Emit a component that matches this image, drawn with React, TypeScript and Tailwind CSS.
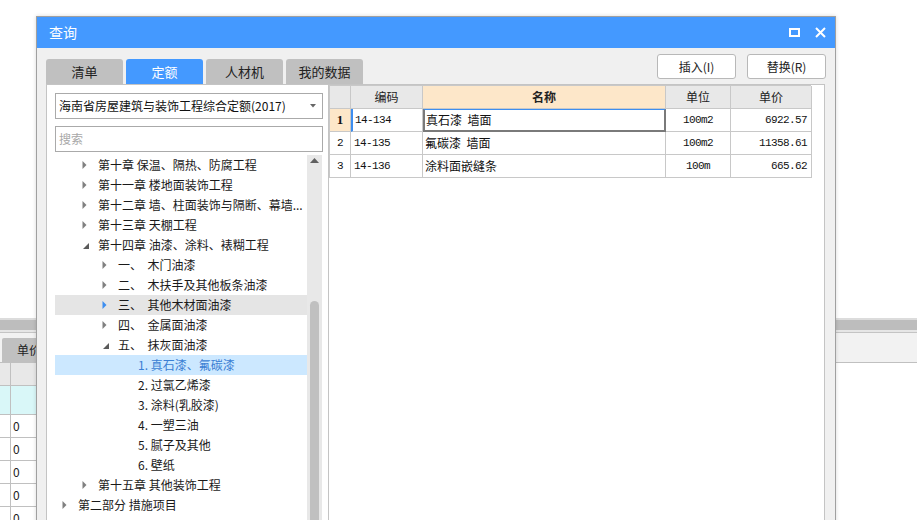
import React from "react";

type Node = {
  level: 1 | 2 | 3 | 4;
  text: string;
  state: "collapsed" | "expanded" | "leaf";
  hover?: boolean;
  selected?: boolean;
};

const tree: Node[] = [
  { level: 2, text: "第十章 保温、隔热、防腐工程", state: "collapsed" },
  { level: 2, text: "第十一章 楼地面装饰工程", state: "collapsed" },
  { level: 2, text: "第十二章 墙、柱面装饰与隔断、幕墙...", state: "collapsed" },
  { level: 2, text: "第十三章 天棚工程", state: "collapsed" },
  { level: 2, text: "第十四章 油漆、涂料、裱糊工程", state: "expanded" },
  { level: 3, text: "一、  木门油漆", state: "collapsed" },
  { level: 3, text: "二、  木扶手及其他板条油漆", state: "collapsed" },
  { level: 3, text: "三、  其他木材面油漆", state: "collapsed", hover: true },
  { level: 3, text: "四、  金属面油漆", state: "collapsed" },
  { level: 3, text: "五、  抹灰面油漆", state: "expanded" },
  { level: 4, text: "1. 真石漆、氟碳漆", state: "leaf", selected: true },
  { level: 4, text: "2. 过氯乙烯漆", state: "leaf" },
  { level: 4, text: "3. 涂料(乳胶漆)", state: "leaf" },
  { level: 4, text: "4. 一塑三油", state: "leaf" },
  { level: 4, text: "5. 腻子及其他", state: "leaf" },
  { level: 4, text: "6. 壁纸", state: "leaf" },
  { level: 2, text: "第十五章 其他装饰工程", state: "collapsed" },
  { level: 1, text: "第二部分 措施项目", state: "collapsed" },
];

const indent = {
  1: "pl-[7px]",
  2: "pl-[27px]",
  3: "pl-[47px]",
  4: "pl-[67px]",
};

const rows = [
  { no: "1", code: "14-134", name: "真石漆  墙面", unit: "100m2", price: "6922.57" },
  { no: "2", code: "14-135", name: "氟碳漆  墙面", unit: "100m2", price: "11358.61" },
  { no: "3", code: "14-136", name: "涂料面嵌缝条", unit: "100m", price: "665.62" },
];

const ui = "font-['Noto_Sans_CJK_SC','Microsoft_YaHei',sans-serif]";
const mono = "font-['Liberation_Mono','Noto_Sans_CJK_SC',monospace] text-[11px] tracking-[-0.6px]";

function Arrow({ node }: { node: Node }) {
  if (node.state === "leaf") return <span className="w-[16px] shrink-0" />;
  if (node.state === "expanded")
    return (
      <span className="w-[16px] shrink-0 flex items-center">
        <svg width="7" height="7" viewBox="0 0 7 7" className="ml-[1px] mt-[3px]">
          <polygon points="6,0 6,6 0,6" fill="#5a5a5a" />
        </svg>
      </span>
    );
  return (
    <span className="w-[16px] shrink-0 flex items-center">
      <svg width="5" height="8" viewBox="0 0 5 8">
        <polygon points="0.5,0 4.5,4 0.5,8" fill={node.hover ? "#3d8ef0" : "#808080"} />
      </svg>
    </span>
  );
}

function TreeRow({ node }: { node: Node }) {
  const bg = node.selected ? "bg-[#cce8ff]" : node.hover ? "bg-[#e5e5e5]" : "";
  const color = node.selected ? "text-[#3b7fd4]" : "text-[#1a1a1a]";
  return (
    <div className={`h-[20px] flex items-center whitespace-pre overflow-hidden ${indent[node.level]} ${bg}`}>
      <Arrow node={node} />
      <span className={`text-[12px] leading-[20px] ${color}`}>{node.text}</span>
    </div>
  );
}

function Background() {
  return (
    <div className="flex flex-col w-full">
      <div className="h-[318px] bg-white" />
      <div className="h-[2px] bg-[#dcdcdc]" />
      <div className="h-[10px] bg-[#bdbdbd]" />
      <div className="h-[2px] bg-[#e6e6e6]" />
      <div className="h-[1px] bg-[#c4c4c4]" />
      <div className="h-[30px] bg-[#f2f2f2] flex items-end pl-[2px] border-b border-[#c0c0c0]">
        <div className="h-[24px] w-[60px] bg-[#c0c0c0] rounded-t-[2px] flex items-center pl-[15px] text-[12px] text-[#222]">
          单价
        </div>
      </div>
      <div className="w-[200px]">
        <div className="flex h-[23px] bg-[#e8e8e8] border-b border-[#c0c0c0]">
          <div className="w-[11px] border-r border-[#c0c0c0]" />
        </div>
        <div className="flex h-[29px] bg-[#d9f7f8] border-b border-[#c0c0c0]">
          <div className="w-[11px] border-r border-[#c0c0c0]" />
          <div className="w-[30px] border-r border-[#c0c0c0]" />
        </div>
        {[0, 1, 2, 3, 4].map((i) => (
          <div key={i} className="flex h-[23px] bg-white border-b border-[#c0c0c0]">
            <div className="w-[11px] border-r border-[#c0c0c0]" />
            <div className="w-[30px] border-r border-[#c0c0c0] pl-[2px] flex items-center text-[12px] text-[#222]">0</div>
          </div>
        ))}
      </div>
    </div>
  );
}

function Table() {
  const cols = "grid grid-cols-[21px_72px_243px_65px_81px]";
  const cell = "border-r border-b border-[#c8c8c8] h-[23px] flex items-center";
  return (
    <div className="w-[482px] border-l border-t border-[#c8c8c8]">
      <div className={`${cols} text-[12px] text-[#222]`}>
        <div className={`${cell} bg-[#e8e8e8]`} />
        <div className={`${cell} bg-[#e8e8e8] justify-center`}>编码</div>
        <div className={`${cell} bg-[#fde7c9] justify-center font-bold`}>名称</div>
        <div className={`${cell} bg-[#e8e8e8] justify-center`}>单位</div>
        <div className={`${cell} bg-[#e8e8e8] justify-center`}>单价</div>
      </div>
      {rows.map((r, i) => {
        const cur = i === 0;
        return (
          <div key={r.no} className={`${cols} text-[#111]`}>
            <div
              className={`${cell} justify-center ${
                cur
                  ? "bg-[#fde7c9] font-bold font-['Liberation_Serif',serif] text-[13px]"
                  : `bg-white ${mono}`
              }`}
            >
              {r.no}
            </div>
            <div className={`${cell} bg-white pl-[2px] ${mono} ${cur ? "border-l-2 border-l-[#3d8ef0]" : "pl-[3px]"}`}>
              {r.code}
            </div>
            {cur ? (
              <div className="border-r-2 border-b-2 border-l-2 border-t border-[#7a7a7a] border-t-[#3d8ef0] h-[23px] flex items-center pl-[1px] bg-white text-[12px] whitespace-pre">
                {r.name}
              </div>
            ) : (
              <div className={`${cell} bg-white pl-[2px] text-[12px] whitespace-pre`}>{r.name}</div>
            )}
            <div className={`${cell} bg-white justify-center ${mono}`}>{r.unit}</div>
            <div className={`${cell} bg-white justify-end pr-[4px] ${mono}`}>{r.price}</div>
          </div>
        );
      })}
    </div>
  );
}

export default function App() {
  const tabs = ["清单", "定额", "人材机", "我的数据"];
  return (
    <div className={`relative w-[917px] h-[520px] overflow-hidden bg-white ${ui}`}>
      <Background />

      {/* dialog window */}
      <div className="absolute left-[36px] top-[16px] w-[800px] h-[520px] border border-[#a0a0a0] bg-[#f0f0f0] flex flex-col shadow-[0_0_4px_rgba(0,0,0,0.15)]">
        <div className="h-[31px] bg-[#4499ff] flex items-center justify-between pl-[12px] pr-[9px] shrink-0">
          <span className="text-[14px] text-white">查询</span>
          <div className="flex items-center gap-[14px]">
            <svg width="12" height="10" viewBox="0 0 12 10">
              <rect x="1" y="1" width="9" height="7" fill="none" stroke="white" strokeWidth="2" />
            </svg>
            <svg width="11" height="11" viewBox="0 0 11 11">
              <path d="M1 1 L10 10 M10 1 L1 10" stroke="white" strokeWidth="2" />
            </svg>
          </div>
        </div>

        <div className="flex justify-between h-[36px] pl-[9px] pr-[9px] shrink-0">
          <div className="flex items-end gap-[3px]">
            {tabs.map((t, i) => (
              <div
                key={t}
                className={`w-[77px] h-[25px] rounded-t-[3px] flex items-center justify-center text-[13px] ${
                  i === 1 ? "bg-[#4499ff] text-white" : "bg-[#c0c0c0] text-[#222]"
                }`}
              >
                {t}
              </div>
            ))}
          </div>
          <div className="flex gap-[11px] pt-[6px]">
            {["插入(I)", "替换(R)"].map((b) => (
              <div
                key={b}
                className="w-[79px] h-[25px] bg-white border border-[#b8b8b8] rounded-[3px] flex items-center justify-center text-[12px] text-[#222]"
              >
                {b}
              </div>
            ))}
          </div>
        </div>

        <div className="flex flex-1 pl-[9px] min-h-0">
          {/* left tree panel */}
          <div className="w-[283px] bg-white border border-[#c4c4c4] flex flex-col pt-[8px] pl-[8px] pr-[5px]">
            <div className="h-[26px] border border-[#aaaaaa] flex items-center justify-between pl-[3px] pr-[6px] text-[12px] text-[#111]">
              <span>海南省房屋建筑与装饰工程综合定额(2017)</span>
              <svg width="6" height="4" viewBox="0 0 6 4">
                <polygon points="0,0 6,0 3,3.5" fill="#666" />
              </svg>
            </div>
            <div className="h-[26px] mt-[7px] border border-[#aaaaaa] flex items-center pl-[3px] text-[12px] text-[#a8a8a8]">
              搜索
            </div>
            <div className="flex flex-1 mt-[3px] min-h-0">
              <div className="w-[252px] flex flex-col">
                {tree.map((n, i) => (
                  <TreeRow key={i} node={n} />
                ))}
              </div>
              <div className="w-[15px] bg-[#e8e8e8] flex flex-col items-center">
                <svg width="9" height="5" viewBox="0 0 9 5" className="mt-[3px]">
                  <polygon points="0,5 4.5,0 9,5" fill="#606060" />
                </svg>
                <div className="mt-[138px] w-[9px] flex-1 bg-[#c0c0c0] rounded-t-[5px]" />
              </div>
            </div>
          </div>

          {/* right result panel */}
          <div className="w-[496px] bg-white border-y border-r border-[#c4c4c4]">
            <Table />
          </div>
        </div>
      </div>
    </div>
  );
}
